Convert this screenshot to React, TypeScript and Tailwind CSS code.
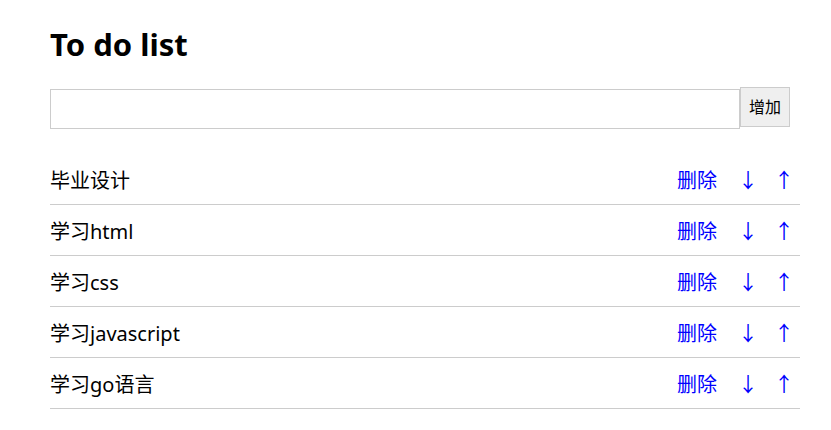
import React, { useState } from "react";

const initialTodos = ["毕业设计", "学习html", "学习css", "学习javascript", "学习go语言"];

const App: React.FC = () => {
  const [todos, setTodos] = useState<string[]>(initialTodos);
  const [text, setText] = useState("");

  const add = () => {
    if (!text.trim()) return;
    setTodos([...todos, text.trim()]);
    setText("");
  };

  const remove = (i: number) => setTodos(todos.filter((_, idx) => idx !== i));

  const move = (i: number, dir: number) => {
    const j = i + dir;
    if (j < 0 || j >= todos.length) return;
    const next = [...todos];
    [next[i], next[j]] = [next[j], next[i]];
    setTodos(next);
  };

  return (
    <div className="min-h-screen bg-white text-black font-['Noto_Sans','Noto_Sans_CJK_SC',sans-serif]">
      <div className="ml-[50px] w-[750px] pt-[24px]">
        <h1 className="text-[31px] leading-[40px] font-bold">To do list</h1>

        {/* input row */}
        <div className="mt-[23px] flex items-start">
          <input
            value={text}
            onChange={(e) => setText(e.target.value)}
            className="mt-[2px] h-[40px] w-[690px] border border-[#cccccc] px-2 text-[16px] outline-none"
          />
          <button
            onClick={add}
            className="h-[40px] w-[50px] border border-[#cccccc] bg-[#efefef] text-[16px] text-black"
          >
            增加
          </button>
        </div>

        {/* list */}
        <ul className="mt-[25px]">
          {todos.map((item, i) => (
            <li
              key={item + i}
              className="flex h-[51px] items-center justify-between border-b border-[#cccccc] pt-[4px] text-[20px]"
            >
              <span>{item}</span>
              <span className="flex items-center pr-[6px] text-[#0000ff]">
                <a className="cursor-pointer" onClick={() => remove(i)}>删除</a>
                <a className="ml-[21px] cursor-pointer" onClick={() => move(i, 1)}>↓</a>
                <a className="ml-[16px] cursor-pointer" onClick={() => move(i, -1)}>↑</a>
              </span>
            </li>
          ))}
        </ul>
      </div>
    </div>
  );
};

export default App;
